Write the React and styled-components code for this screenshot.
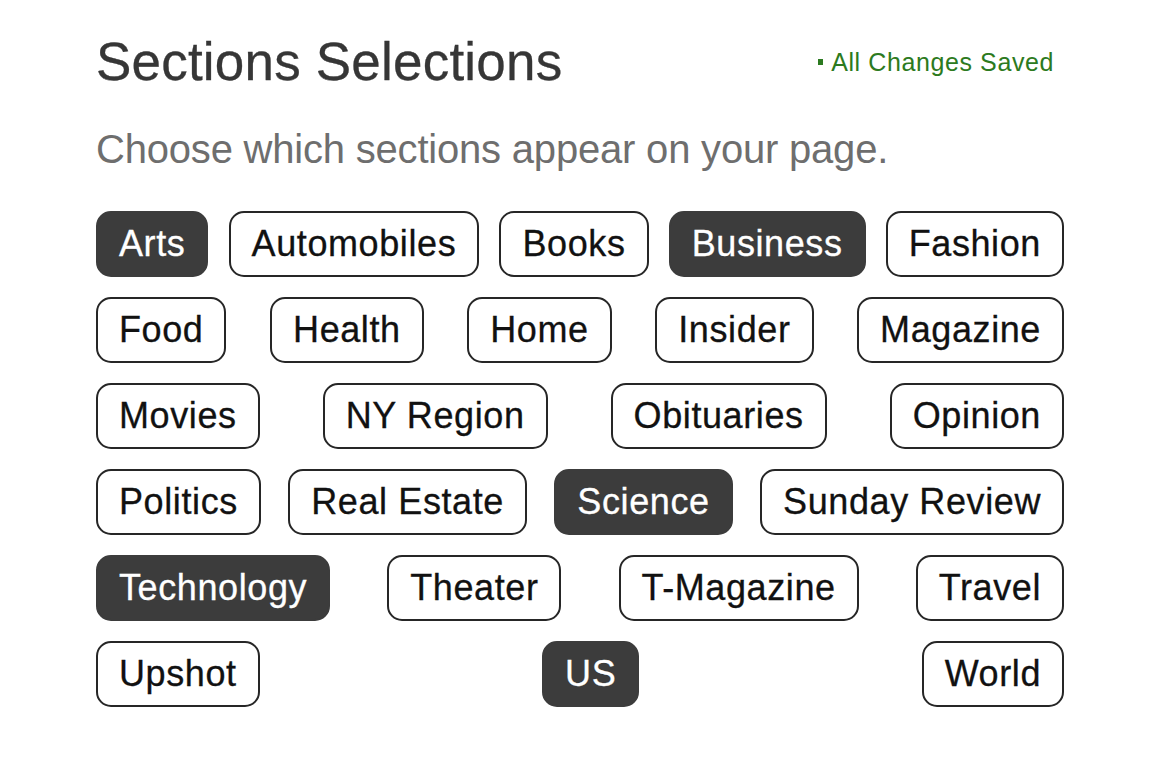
import React, { useState } from "react";
import styled, { createGlobalStyle } from "styled-components";

const Global = createGlobalStyle`
  html, body { margin: 0; padding: 0; background: #ffffff; }
  body { font-family: "Liberation Sans", Arial, sans-serif; }
`;

const Page = styled.main`
  width: 968px;
  padding: 32px 0 40px 96px;
`;

const Header = styled.header`
  display: flex;
  align-items: center;
  justify-content: space-between;
`;

const Title = styled.h1`
  margin: 0;
  font-size: 53px;
  line-height: 60px;
  font-weight: 400;
  color: #363636;
  letter-spacing: 0.2px;
  -webkit-text-stroke: 0.3px #363636;
`;

const Status = styled.div`
  display: flex;
  align-items: center;
  gap: 8px;
  margin-right: 10px;
  font-size: 25px;
  line-height: 30px;
  color: #2c7a20;
  letter-spacing: 0.6px;
`;

const Dot = styled.span`
  width: 5px;
  height: 6px;
  background: #2c7a20;
`;

const Subtitle = styled.p`
  margin: 34px 0 39px;
  font-size: 40px;
  line-height: 46px;
  color: #6e6e6e;
  letter-spacing: -0.2px;
`;

const Grid = styled.div`
  display: flex;
  flex-direction: column;
  gap: 20px;
`;

const Row = styled.div`
  display: flex;
  justify-content: space-between;
`;

const Chip = styled.button`
  font-family: "Liberation Sans", Arial, sans-serif;
  font-size: 36px;
  line-height: 40px;
  letter-spacing: 0.6px;
  padding: 11px 21px;
  border-radius: 15px;
  border: 2px solid ${(p) => (p.$on ? "#3c3c3c" : "#262626")};
  background: ${(p) => (p.$on ? "#3c3c3c" : "#ffffff")};
  color: ${(p) => (p.$on ? "#ffffff" : "#111111")};
  -webkit-text-stroke: 0.3px ${(p) => (p.$on ? "#ffffff" : "#111111")};
  cursor: pointer;
  white-space: nowrap;
`;

const rows = [
  ["Arts", "Automobiles", "Books", "Business", "Fashion"],
  ["Food", "Health", "Home", "Insider", "Magazine"],
  ["Movies", "NY Region", "Obituaries", "Opinion"],
  ["Politics", "Real Estate", "Science", "Sunday Review"],
  ["Technology", "Theater", "T-Magazine", "Travel"],
  ["Upshot", "US", "World"],
];

export default function App() {
  const [selected, setSelected] = useState(
    new Set(["Arts", "Business", "Science", "Technology", "US"])
  );
  const toggle = (name) => {
    const next = new Set(selected);
    next.has(name) ? next.delete(name) : next.add(name);
    setSelected(next);
  };
  return (
    <Page>
      <Global />
      <Header>
        <Title>Sections Selections</Title>
        <Status>
          <Dot />
          All Changes Saved
        </Status>
      </Header>
      <Subtitle>Choose which sections appear on your page.</Subtitle>
      <Grid>
        {rows.map((r, i) => (
          <Row key={i}>
            {r.map((name) => (
              <Chip key={name} $on={selected.has(name)} onClick={() => toggle(name)}>
                {name}
              </Chip>
            ))}
          </Row>
        ))}
      </Grid>
    </Page>
  );
}
